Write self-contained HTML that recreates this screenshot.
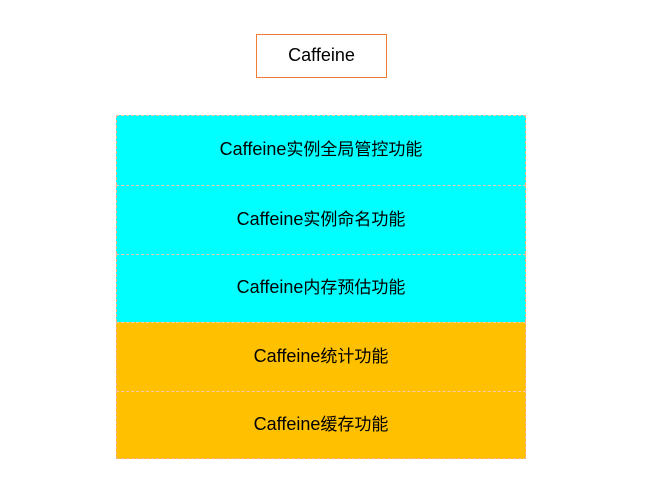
<!DOCTYPE html>
<html><head><style>
body{margin:0;width:651px;height:493px;background:#fff;position:relative;font-family:"Liberation Sans","Noto Sans CJK SC",sans-serif;font-size:17px;color:#000}
.t{position:absolute;left:256px;top:34px;width:129px;height:41px;border:1px solid #ed7d31;display:flex;align-items:center;justify-content:center;padding-bottom:1px;box-sizing:content-box}
.r{position:absolute;left:116px;width:410px;display:flex;align-items:center;justify-content:center;padding-bottom:6px;box-sizing:border-box;border-left:1px dashed #f4b183;border-right:1px dashed #f4b183;border-top:1px dashed #f8cbad}
.c{background:#00ffff}.o{background:#ffc000}
span{font-size:18px}
</style></head><body>
<div class="t"><div><span>Caffeine</span></div></div>
<div class="r c" style="top:115px;height:70px"><div><span>Caffeine</span>实例全局管控功能</div></div>
<div class="r c" style="top:185px;height:69px"><div><span>Caffeine</span>实例命名功能</div></div>
<div class="r c" style="top:254px;height:68px"><div><span>Caffeine</span>内存预估功能</div></div>
<div class="r o" style="top:322px;height:69px"><div><span>Caffeine</span>统计功能</div></div>
<div class="r o" style="top:391px;height:68px;border-bottom:1px dashed #f4b183"><div><span>Caffeine</span>缓存功能</div></div>
</body></html>
